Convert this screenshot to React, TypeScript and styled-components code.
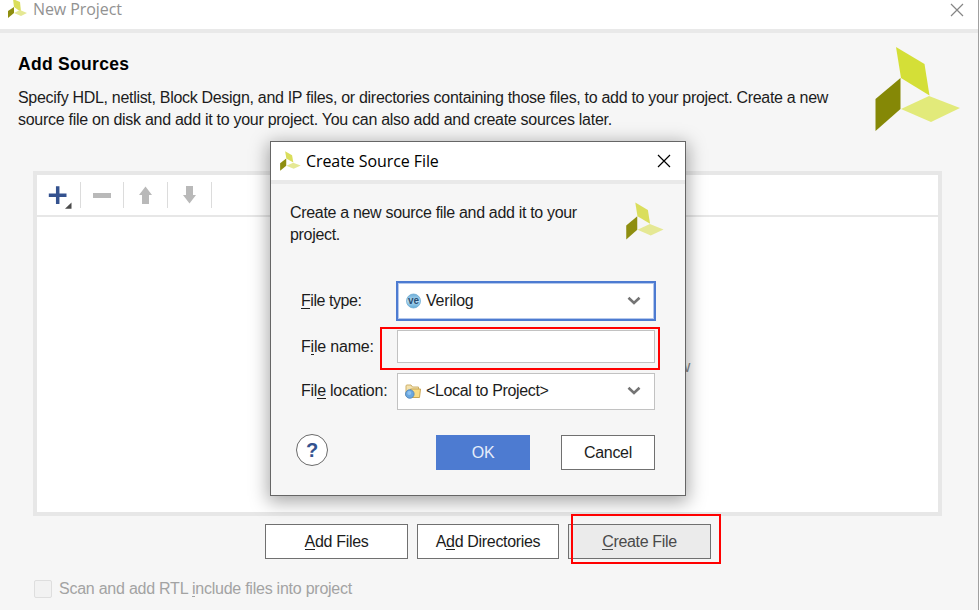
import React from "react";
import styled, { createGlobalStyle, css } from "styled-components";

const Global = createGlobalStyle`
  * { box-sizing: border-box; }
  body { margin: 0; overflow: hidden; background: #f6f6f6; }
  u { text-decoration: none; box-shadow: inset 0 -1px 0 currentColor; display: inline-block; line-height: 17px; }
`;

const Window = styled.main`
  position: relative;
  width: 979px;
  height: 610px;
  overflow: hidden;
  background: #f6f6f6;
  border-right: 1px solid #a0a0a0;
  font: 16px/22px "Liberation Sans", Arial, sans-serif;
  color: #1c1c1c;
`;

const Text = styled.span<{ $ls?: number }>`
  display: block;
  white-space: nowrap;
  letter-spacing: ${(p) => p.$ls ?? -0.32}px;
`;

const WindowBar = styled.header`
  display: flex;
  align-items: flex-start;
  height: 33px;
  padding: 0 14px 0 7px;
  background: #fff;
  border-bottom: 4px solid #e9e9e9;
  color: #929292;
  svg { flex: none; }
`;

const WindowTitle = styled.h1<{ $lh: number }>`
  flex: 1;
  margin: 0 0 0 5px;
  font: 400 16px/${(p) => p.$lh}px "Open Sans", "Noto Sans", sans-serif;
  letter-spacing: -0.08px;
`;

const Intro = styled.section`
  display: flex;
  justify-content: space-between;
  height: 138px;
  padding: 13px 17px 0 18px;
`;

const Heading = styled.h2`
  margin: 7px 0 12px;
  font: 700 17.5px/22px "Liberation Sans", Arial, sans-serif;
  letter-spacing: 0.3px;
  color: #000;
`;

const Panel = styled.section`
  width: 909px;
  height: 345px;
  margin-left: 33px;
  border: 4px solid #e7e7e7;
  background: #fff;
`;

const Toolbar = styled.div`
  display: flex;
  align-items: center;
  height: 42px;
  border-bottom: 2px solid #e7e7e7;
`;

const Tool = styled.div<{ $w: number }>`
  display: flex;
  align-items: center;
  justify-content: center;
  width: ${(p) => p.$w}px;
  height: 26px;
  border-right: 1px solid #dcdcdc;
  svg { overflow: visible; }
`;

const PanelHint = styled.div`
  display: flex;
  justify-content: flex-end;
  padding: 139px 248px 0 0;
  color: #8a8a8a;
`;

const Actions = styled.div`
  display: flex;
  gap: 9px;
  padding: 8px 0 0 265px;
`;

const Button = styled.button<{ $w: number; $kind?: "primary" | "pressed" }>`
  display: flex;
  align-items: center;
  justify-content: center;
  width: ${(p) => p.$w}px;
  height: 35px;
  padding: 0;
  border: 1px solid #707070;
  background: #fff;
  font: inherit;
  color: #1c1c1c;
  ${(p) => p.$kind === "primary" && css`
    background: #4d7bd1; border-color: #4d7bd1; color: #e6edfa;
  `}
  ${(p) => p.$kind === "pressed" && css`
    background: #ebebeb; color: #4a4a4a;
  `}
`;

const ScanOption = styled.label`
  display: flex;
  align-items: center;
  gap: 7px;
  height: 22px;
  margin: 19px 0 0 34px;
  color: #a3a3a3;
`;

const CheckBox = styled.span`
  width: 18px;
  height: 18px;
  border: 1.5px solid #dedede;
  border-radius: 2px;
  background: #f2f2f2;
`;

const Dialog = styled.section`
  position: absolute;
  left: 270px;
  top: 141px;
  width: 416px;
  height: 355px;
  border: 1px solid #666;
  background: #f6f6f6;
  box-shadow: 0 4px 17px 2px rgba(0, 0, 0, 0.34);
`;

const DialogBar = styled.header`
  display: flex;
  align-items: center;
  height: 42px;
  padding: 0 14px 1px 9px;
  border-bottom: 4px solid #e9e9e9;
  background: #fff;
  color: #000;
`;

const DialogIntro = styled.div`
  display: flex;
  justify-content: space-between;
  height: 97px;
  padding: 18px 21px 0 19px;
`;

const Fields = styled.div`
  display: grid;
  grid-template-columns: 95px 260px;
  grid-template-rows: 40px 33px 38px;
  row-gap: 9px;
  align-items: center;
  padding-left: 30px;
`;

const Field = styled.div<{ $focus?: boolean; $h: number }>`
  display: flex;
  align-items: center;
  align-self: end;
  justify-self: center;
  gap: 5px;
  width: ${(p) => (p.$focus ? 260 : 258)}px;
  height: ${(p) => p.$h}px;
  padding: ${(p) => (p.$focus ? "0 13px 0 8px" : "0 13px 1px 7px")};
  border: ${(p) => (p.$focus ? "2px solid #4d7bd1" : "1px solid #c2c2c2")};
  box-shadow: ${(p) => (p.$focus ? "inset 0 0 0 1px #b4c8ec" : "none")};
  background: #fff;
  svg:last-child { margin-left: auto; }
`;

const Footer = styled.footer`
  display: flex;
  align-items: flex-start;
  padding: 24px 0 0 25px;
  button { margin-top: 1px; }
  button + button { margin-left: 31px; }
`;

const Help = styled.div`
  display: flex;
  align-items: center;
  justify-content: center;
  width: 32px;
  height: 32px;
  margin-right: 108px;
  border: 1.5px solid #6a6a6a;
  border-radius: 50%;
  background: #fff;
  color: #34528f;
  font: 700 20px/28px "Liberation Sans", Arial, sans-serif;
`;

const Highlight = styled.div<{ $x: number; $y: number; $w: number; $h: number }>`
  position: absolute;
  left: ${(p) => p.$x}px;
  top: ${(p) => p.$y}px;
  width: ${(p) => p.$w}px;
  height: ${(p) => p.$h}px;
  border: 2px solid #f00;
`;

const Logo = ({ w, h, soft }: { w: number; h: number; soft?: boolean }) => (
  <svg width={w} height={h} viewBox="0 0 86 86" preserveAspectRatio="none">
    <path d="M21 1 49.500 18 54.500 49.500 26 32Z" fill={soft ? "#dade5c" : "#d4df37"} />
    <path d="M.5 53 25.500 32V63L.5 85Z" fill={soft ? "#8e8e10" : "#858806"} />
    <path d="M26 63 54 50 85 62 56 76Z" fill={soft ? "#e5e894" : "#e2ea7a"} />
  </svg>
);

const Close = ({ c }: { c: string }) => (
  <svg width="14" height="14" viewBox="0 0 14 14" fill="none" stroke={c} strokeWidth="1.200">
    <path d="M1 1 13 13M13 1 1 13" />
  </svg>
);

const Chevron = () => (
  <svg width="14" height="10" viewBox="0 0 14 10" fill="none" stroke="#747474" strokeWidth="2.600">
    <path d="M1.500 1.700 7 7 12.500 1.700" />
  </svg>
);

const PlusIcon = () => (
  <svg width="24" height="24" viewBox="0 0 24 24">
    <path d="M1.800 12.200H19.500M10.700 3.300V21" stroke="#34528f" strokeWidth="3.500" />
    <path d="M24.500 19.500V25.700H18Z" fill="#4b4b4b" />
  </svg>
);

const ArrowIcon = ({ down }: { down?: boolean }) => (
  <svg width="14" height="18" viewBox="0 0 14 18">
    <path d={down ? "M3 0H10V9H13L6.500 17.500 0 9H3Z" : "M3 18H10V9H13L6.500 .5 0 9H3Z"} fill="#b9b9b9" />
  </svg>
);

const VerilogIcon = () => (
  <svg width="15" height="16" viewBox="0 0 15 16">
    <defs>
      <linearGradient id="ball" x2="0" y2="1">
        <stop stopColor="#69add8" />
        <stop offset=".5" stopColor="#b8dcf2" />
        <stop offset="1" stopColor="#60abd8" />
      </linearGradient>
    </defs>
    <circle cx="7.500" cy="8" r="7" fill="url(#ball)" stroke="#6eabd2" strokeWidth=".8" />
    <text x="7.500" y="11.300" textAnchor="middle" fontFamily="Liberation Sans" fontWeight="700" fontSize="10" textLength="11" fill="#294f73">ve</text>
  </svg>
);

const FolderIcon = () => (
  <svg width="16" height="15" viewBox="0 0 16 15">
    <path d="M1 12V2Q1 1 2 1H6L7.500 3H13.500V12Z" fill="#f4e2ae" stroke="#cdb06a" />
    <path d="M4 13.500 5.500 5H15.500L14.500 13.500Z" fill="#f9dc84" stroke="#c9a654" />
    <circle cx="4.800" cy="10" r="4.300" fill="#6aa7e0" stroke="#4c82b8" strokeWidth=".8" />
    <circle cx="4.300" cy="9" r="2" fill="#8fc3ef" />
  </svg>
);

export default function App() {
  return (
    <Window>
      <Global />
      <WindowBar>
        <svg width="21" height="19" viewBox="0 0 21 19">
          <path d="M6-1 13 2 14 12 7 7Z" fill="#dade5c" />
          <path d="M1 11 7 7V13L1 18Z" fill="#8e8e10" />
          <path d="M7 13 13 10 20 13 14 16Z" fill="#e5e894" />
        </svg>
        <WindowTitle $lh={19}>New Project</WindowTitle>
        <svg width="14" height="18" viewBox="0 0 14 18" fill="none" stroke="#858585" strokeWidth="1.200">
          <path d="M1 4 13 16M13 4 1 16" />
        </svg>
      </WindowBar>
      <Intro>
        <div>
          <Heading>Add Sources</Heading>
          <Text $ls={-0.305}>Specify HDL, netlist, Block Design, and IP files, or directories containing those files, to add to your project. Create a new</Text>
          <Text $ls={-0.28}>source file on disk and add it to your project. You can also add and create sources later.</Text>
        </div>
        <Logo w={86} h={86} />
      </Intro>
      <Panel>
        <Toolbar>
          <Tool $w={44}><PlusIcon /></Tool>
          <Tool $w={43}><svg width="18" height="5"><rect width="18" height="5" fill="#b9b9b9" /></svg></Tool>
          <Tool $w={44}><ArrowIcon /></Tool>
          <Tool $w={44}><ArrowIcon down /></Tool>
        </Toolbar>
        <PanelHint><Text>below</Text></PanelHint>
      </Panel>
      <Actions>
        <Button $w={143}><Text><u>A</u>dd Files</Text></Button>
        <Button $w={142}><Text>A<u>d</u>d Directories</Text></Button>
        <Button $w={143} $kind="pressed"><Text><u>C</u>reate File</Text></Button>
      </Actions>
      <ScanOption>
        <CheckBox />
        <Text $ls={-0.24}>Scan and add RTL <u>i</u>nclude files into project</Text>
      </ScanOption>
      <Dialog>
        <DialogBar>
          <Logo w={21} h={20} soft />
          <WindowTitle $lh={22}>Create Source File</WindowTitle>
          <Close c="#000" />
        </DialogBar>
        <DialogIntro>
          <div>
            <Text>Create a new source file and add it to your</Text>
            <Text>project.</Text>
          </div>
          <Logo w={38} h={38} soft />
        </DialogIntro>
        <Fields>
          <Text $ls={-0.45}><u>F</u>ile type:</Text>
          <Field $focus $h={40}><VerilogIcon /><Text $ls={-0.2}>Verilog</Text><Chevron /></Field>
          <Text $ls={-0.2}>F<u>i</u>le name:</Text>
          <Field $h={33} />
          <Text $ls={-0.25}>Fil<u>e</u> location:</Text>
          <Field $h={37}><FolderIcon /><Text $ls={-0.36}>&lt;Local to Project&gt;</Text><Chevron /></Field>
        </Fields>
        <Footer>
          <Help>?</Help>
          <Button $w={94} $kind="primary"><Text>OK</Text></Button>
          <Button $w={94}><Text>Cancel</Text></Button>
        </Footer>
      </Dialog>
      <Highlight $x={380} $y={327} $w={280} $h={43} />
      <Highlight $x={571} $y={514} $w={150} $h={50} />
    </Window>
  );
}
